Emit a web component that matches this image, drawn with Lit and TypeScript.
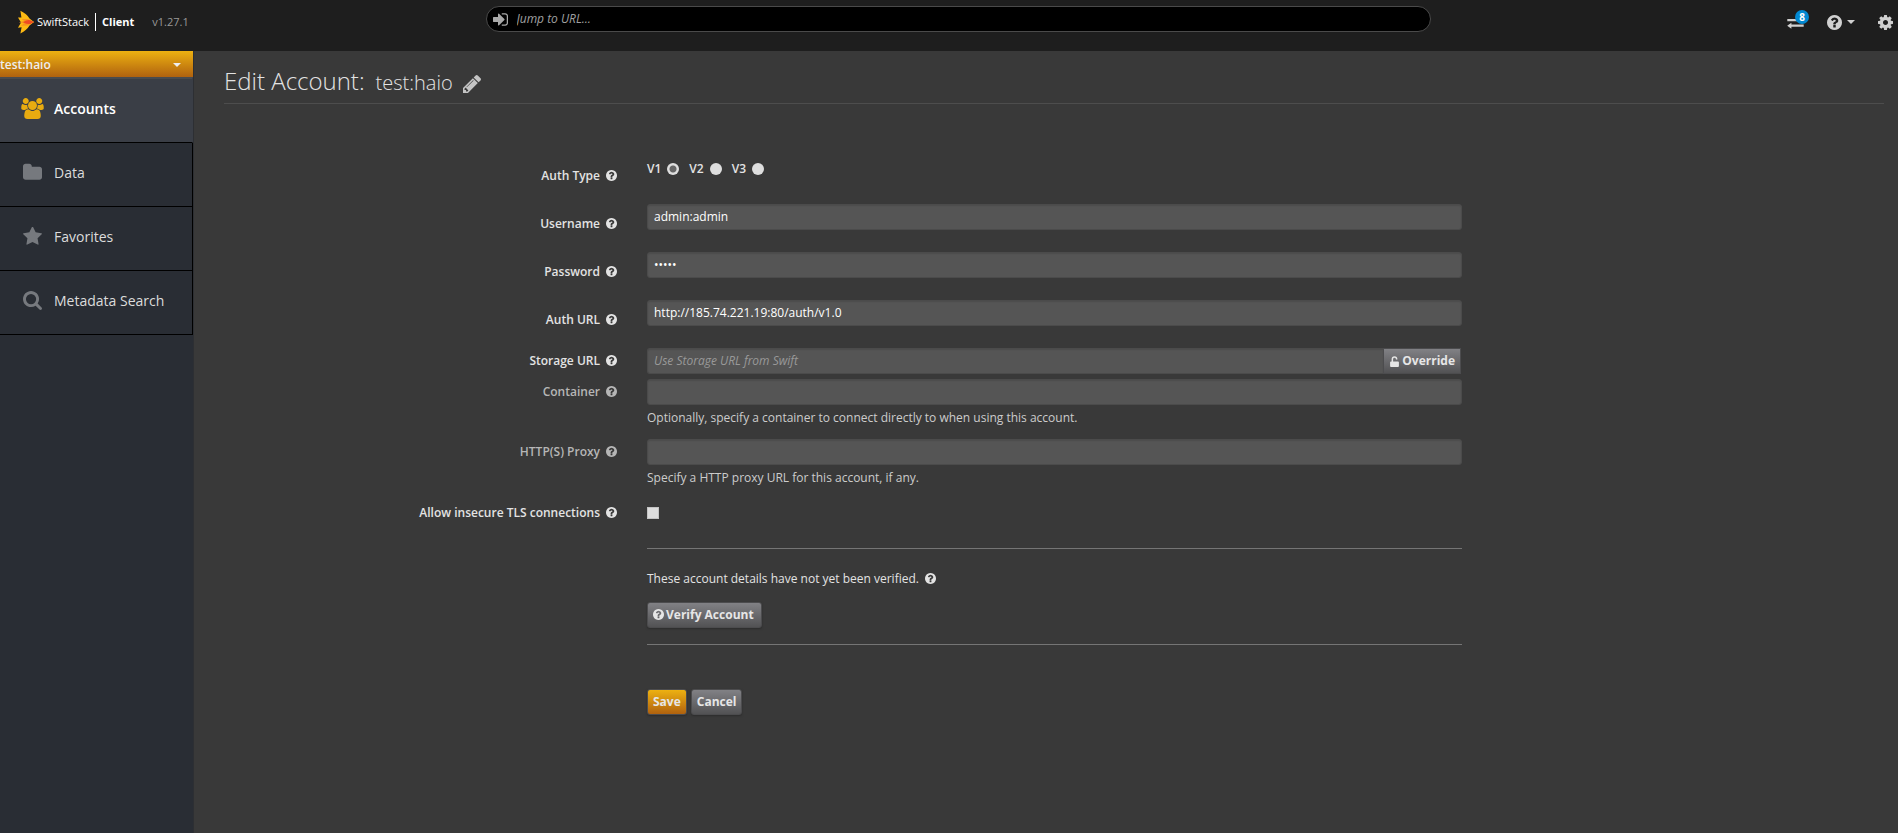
import { LitElement, html, css, svg, nothing } from "lit";
import { customElement, property } from "lit/decorators.js";
import { classMap } from "lit/directives/class-map.js";

const ICONS: Record<string, { box: string; d: string }> = {
  help: {
    box: "128 128 1536 1536",
    d: "M1024 1376v-192q0-14-9-23t-23-9h-192q-14 0-23 9t-9 23v192q0 14 9 23t23 9h192q14 0 23-9t9-23zm256-672q0-88-55.5-163t-138.5-116-170-41q-243 0-371 213-15 24 8 42l132 100q7 6 19 6 16 0 25-12 53-68 86-92 34-24 86-24 48 0 85.5 26t37.5 59q0 38-20 61t-68 45q-63 28-115.5 86.5t-52.5 125.5v36q0 14 9 23t23 9h192q14 0 23-9t9-23q0-19 21.5-49.5t54.5-49.5q32-18 49-28.5t46-35 44.5-48 28-60.5 12.5-81zm384 192q0 209-103 385.5t-279.5 279.5-385.5 103-385.5-103-279.5-279.5-103-385.5 103-385.5 279.5-279.5 385.5-103 385.5 103 279.5 279.5 103 385.5z",
  },
  users: {
    box: "-64 0 1920 1792",
    d: "M529 896q-162 5-265 128h-134q-82 0-138-40.5t-56-118.5q0-353 124-353 6 0 43.5 21t97.5 42.5 119 21.5q67 0 133-23-5 37-5 66 0 139 81 256zm1071 637q0 120-73 189.5t-194 69.5h-874q-121 0-194-69.5t-73-189.5q0-53 3.5-103.5t14-109 26.5-108.5 43-97.5 62-81 85.5-53.5 111.5-20q10 0 43 21.5t73 48 107 48 135 21.5 135-21.5 107-48 73-48 43-21.5q61 0 111.5 20t85.5 53.5 62 81 43 97.5 26.5 108.5 14 109 3.5 103.5zm-1024-1277q0 106-75 181t-181 75-181-75-75-181 75-181 181-75 181 75 75 181zm704 384q0 159-112.5 271.5t-271.5 112.5-271.5-112.5-112.5-271.5 112.5-271.5 271.5-112.5 271.5 112.5 112.5 271.5zm576 225q0 78-56 118.5t-138 40.5h-134q-103-123-265-128 81-117 81-256 0-29-5-66 66 23 133 23 59 0 119-21.5t97.5-42.5 43.5-21q124 0 124 353zm-128-609q0 106-75 181t-181 75-181-75-75-181 75-181 181-75 181 75 75 181z",
  },
  folder: {
    box: "64 64 1664 1664",
    d: "M1728 608v704q0 92-66 158t-158 66h-1216q-92 0-158-66t-66-158v-960q0-92 66-158t158-66h320q92 0 158 66t66 158v32h672q92 0 158 66t66 158z",
  },
  star: {
    box: "64 64 1664 1664",
    d: "M1728 647q0 22-26 48l-363 354 86 500q1 7 1 20 0 21-10.5 35.5t-30.5 14.5q-19 0-40-12l-449-236-449 236q-22 12-40 12-21 0-31.5-14.5t-10.5-35.5q0-6 2-20l86-500-364-354q-25-27-25-48 0-37 56-46l502-73 225-455q19-41 49-41t49 41l225 455 502 73q56 9 56 46z",
  },
  search: {
    box: "64 128 1664 1664",
    d: "M1216 832q0-185-131.5-316.5t-316.5-131.5-316.5 131.5-131.5 316.5 131.5 316.5 316.5 131.5 316.5-131.5 131.5-316.5zm512 832q0 52-38 90t-90 38q-54 0-90-38l-343-342q-179 124-399 124-143 0-273.5-55.5t-225-150-150-225-55.5-273.5 55.5-273.5 150-225 225-150 273.5-55.5 273.5 55.5 225 150 150 225 55.5 273.5q0 220-124 399l343 343q37 37 37 90z",
  },
  pencil: {
    box: "128 149 1515 1515",
    d: "M491 1536l91-91-235-235-91 91v107h128v128h107zm523-928q0-22-22-22-10 0-17 7l-542 542q-7 7-7 17 0 22 22 22 10 0 17-7l542-542q7-7 7-17zm-54-192l416 416-832 832h-416v-416zm683 96q0 53-37 90l-166 166-416-416 166-165q36-38 90-38 53 0 91 38l235 234q37 39 37 91z",
  },
  signin: {
    box: "128 128 1536 1536",
    d: "M1312 896q0 26-19 45l-544 544q-19 19-45 19t-45-19-19-45v-288h-448q-26 0-45-19t-19-45v-384q0-26 19-45t45-19h448v-288q0-26 19-45t45-19 45 19l544 544q19 19 19 45zm352-352v704q0 119-84.5 203.5t-203.5 84.5h-320q-13 0-22.5-9.5t-9.5-22.5q0-4-1-20t-.5-26.5 3-23.5 10-19.5 20.5-6.5h320q66 0 113-47t47-113v-704q0-66-47-113t-113-47h-312l-11.5-1-11.5-3-8-5.5-7-9-2-13.5q0-4-1-20t-.5-26.5 3-23.5 10-19.5 20.5-6.5h320q119 0 203.5 84.5t84.5 203.5z",
  },
  cog: {
    box: "128 128 1536 1536",
    d: "M1152 896q0-106-75-181t-181-75-181 75-75 181 75 181 181 75 181-75 75-181zm512-109v222q0 12-8 23t-20 13l-185 28q-19 54-39 91 35 50 107 138 10 12 10 25t-9 23q-27 37-99 108t-94 71q-12 0-26-9l-138-108q-44 23-91 38-16 136-29 186-7 28-36 28h-222q-14 0-24.5-8.5t-11.5-21.5l-28-184q-49-16-90-37l-141 107q-10 9-25 9-14 0-25-11-126-114-165-168-7-10-7-23 0-12 8-23 15-21 51-66.5t54-70.5q-27-50-41-99l-183-27q-13-2-21-12.5t-8-23.5v-222q0-12 8-23t19-13l186-28q14-46 39-92-40-57-107-138-10-12-10-24 0-10 9-23 26-36 98.5-107.5t94.5-71.5q13 0 26 10l138 107q44-23 91-38 16-136 29-186 7-28 36-28h222q14 0 24.5 8.5t11.5 21.5l28 184q49 16 90 37l142-107q9-9 24-9 13 0 25 10 129 119 165 170 7 8 7 22 0 12-8 23-15 21-51 66.5t-54 70.5q26 50 41 98l183 28q13 2 21 12.5t8 23.5z",
  },
  exchange: {
    box: "0 0 17 12",
    d: "M0.3 2H12V0.2L16 3L12 5.6V4.2H0.3ZM16.7 7.6V9.8H4.4V11.7L0.2 8.7L4.4 5.7V7.6Z",
  },
  unlock: {
    box: "0 0 9 11",
    d: "M1 5.4H1.6V3.2A2.9 2.9 0 0 1 7.4 3.2V3.6H5.9V3.2A1.4 1.4 0 0 0 3.1 3.2V5.4H8A.9.9 0 0 1 8.9 6.3V10.1A.9.9 0 0 1 8 11H1A.9.9 0 0 1 .1 10.1V6.3A.9.9 0 0 1 1 5.4Z",
  },
  caret: { box: "0 0 8 4", d: "M0 0H8L4 4Z" },
};

@customElement("ui-icon")
class UiIcon extends LitElement {
  @property() name = "help";
  static styles = css`
    :host { display: inline-block; flex: none; width: 11px; height: 11px; }
    .glyph { display: block; width: 100%; height: 100%; fill: currentColor; }
  `;
  render() {
    const icon = ICONS[this.name];
    return html`<svg class="glyph" viewBox=${icon.box} aria-hidden="true">${svg`<path d=${icon.d} />`}</svg>`;
  }
}

const NAV = [
  { label: "Accounts", icon: "users", active: true },
  { label: "Data", icon: "folder", active: false },
  { label: "Favorites", icon: "star", active: false },
  { label: "Metadata Search", icon: "search", active: false },
];

@customElement("app-root")
class AppRoot extends LitElement {
  static styles = css`
    :host {
      display: flex;
      flex-direction: column;
      min-height: 100vh;
      background: #393939;
      color: #e3e3e3;
      font: 12px/18px "Open Sans", "Noto Sans", sans-serif;
    }
    * { box-sizing: border-box; }
    input, button, select { font: inherit; color: inherit; margin: 0; }

    .topbar {
      display: grid;
      grid-template-columns: 1fr minmax(200px, 945px) 1fr;
      height: 51px;
      padding-left: 18px;
      background: #1e1e1e;
    }
    .brand { display: flex; align-items: center; height: 43px; color: #fff; }
    .logo { width: 16px; height: 24px; margin-right: 3px; }
    .wordmark { font-size: 11px; font-weight: 500; }
    .product { border-left: 1px solid #fff; margin-left: 6px; padding-left: 6px; font-size: 11px; font-weight: 700; }
    .version { margin-left: 18px; font-size: 11px; color: #999; }
    .jump {
      display: flex;
      align-items: center;
      gap: 9px;
      height: 26px;
      margin-top: 6px;
      padding: 0 6px;
      border: 1px solid #4a4a4a;
      border-radius: 13px;
      background: #000;
      color: #a8a8a8;
    }
    .jump ui-icon { width: 15px; height: 15px; }
    .jump-input { flex: 1; min-width: 0; padding: 0; border: 0; outline: 0; background: none; font-style: italic; }
    .jump-input::placeholder { color: #a0a0a0; opacity: 1; }
    .tools { display: flex; align-items: center; justify-content: flex-end; height: 44px; padding-right: 5px; color: #d0d0d0; }
    .tool { display: flex; align-items: center; gap: 5px; padding: 0; border: 0; background: none; position: relative; }
    .tool ui-icon { width: 15px; height: 15px; }
    .tool .exchange { width: 17px; height: 12px; margin-top: 2px; }
    .tool .caret, .account .caret { width: 8px; height: 4px; }
    .tool + .tool { margin-left: 23px; }
    .badge {
      position: absolute;
      left: 8px;
      top: -5px;
      width: 14px;
      height: 14px;
      border-radius: 7px;
      background: #0288d1;
      color: #fff;
      font: 700 10px/14px "Open Sans", sans-serif;
      text-align: center;
    }

    .body { display: flex; flex: 1; }
    .side { flex: none; width: 194px; background: #292d34; border-right: 1px solid #2d2f33; }
    .account {
      display: flex;
      align-items: center;
      justify-content: space-between;
      width: 100%;
      height: 26px;
      padding: 2px 12px 0 0;
      border: 0;
      background: linear-gradient(#edb111, #b0620f);
      color: #eee;
      font-weight: 600;
    }
    .nav-item {
      display: flex;
      align-items: center;
      gap: 12px;
      height: 64px;
      padding: 0 0 4px 23px;
      border: 1px solid #000;
      border-width: 0 1px 1px 0;
      color: #dcdcdc;
      font-size: 14px;
      text-decoration: none;
    }
    .nav-item ui-icon { width: 19px; height: 19px; color: #76797e; }
    .nav-item.active { height: 66px; border-right-color: #3a3e46; border-top: 2px solid #4a4b4e; background: #3a3e46; color: #fff; font-weight: 600; }
    .nav-item.active ui-icon { width: 23px; height: 21px; margin: 0 -2px; color: #e8ab10; }

    .main { flex: 1; min-width: 0; padding: 13px 14px 0 30px; }
    .title {
      display: flex;
      align-items: baseline;
      height: 40px;
      margin: 0;
      border-bottom: 1px solid #4d4d4d;
      font-size: 24px;
      line-height: 34px;
      font-weight: 300;
    }
    .name { margin: 0 10px 0 11px; font-size: 20px; }
    .title ui-icon { width: 18px; height: 18px; align-self: center; color: #c4c4c4; }

    .form { padding-top: 52px; }
    .row {
      display: grid;
      grid-template-columns: minmax(0, 393fr) minmax(0, 815fr) minmax(0, 392fr);
      column-gap: 30px;
      margin-bottom: 22px;
    }
    .row.tight { margin-bottom: 5px; }
    .row.noted { margin-bottom: 12px; }
    .row.noted + .row:not(.noted) { margin-top: 13px; }
    .label { display: flex; align-items: center; justify-content: flex-end; gap: 6px; height: 26px; font-weight: 600; }
    .label ui-icon, .status ui-icon, .verify ui-icon { margin-bottom: 1px; }
    .label.low { height: 40px; margin-bottom: -14px; }
    .label.dim { color: #b6b6b6; }
    .control { grid-column: 2; }
    .text {
      display: block;
      width: 100%;
      height: 26px;
      padding: 0 6px 2px;
      border: 1px solid #4b4b4b;
      border-radius: 3px;
      outline: 0;
      background: #555;
      color: #fff;
      box-shadow: inset 0 1px 1px #4d4d4d;
    }
    .text::placeholder { color: #999; opacity: 1; font-style: italic; }
    .group { display: flex; padding-right: 1px; }
    .group .text { flex: 1; min-width: 0; border-right: 0; border-radius: 3px 0 0 3px; }
    .group .btn { border-radius: 0; box-shadow: none; }
    .radios { display: flex; gap: 10px; height: 26px; align-items: center; font-weight: 600; }
    .radio { display: flex; align-items: center; gap: 6px; }
    .dot {
      appearance: none;
      width: 12px;
      height: 12px;
      border-radius: 6px;
      background: #dedede;
    }
    .dot:checked { background: radial-gradient(circle, #666 3px, #dedede 4px); }
    .tick { display: block; appearance: none; width: 12px; height: 12px; margin: 7px 0; background: #dedede; border: 1px solid #c4c4c4; }
    .note { margin: 4px 0 0; color: #ccc; }
    .btn {
      display: inline-flex;
      align-items: center;
      gap: 2px;
      height: 26px;
      padding: 0 5px;
      border: 1px solid #4c4c4e;
      border-radius: 3px;
      background: linear-gradient(#818185, #525254);
      box-shadow: 0 1px 2px #2c2c2c;
      color: #e6e6e6;
      font-weight: 700;
    }
    .verify { padding-right: 7px; }
    .save { background: linear-gradient(#edb111, #b0620f); }
    .checks { padding: 21px 0 16px; border: 1px solid #757575; border-width: 1px 0; margin: 0 0 22px; }
    .status { display: flex; align-items: center; gap: 6px; margin: 0 0 14px; }
    .actions { display: flex; gap: 4px; }
  `;

  private label(text: string, forId: string, extra = "") {
    const cls = { label: true, low: extra === "low", dim: extra === "dim" };
    return html`<label class=${classMap(cls)} for=${forId || nothing}>${text}<ui-icon name="help"></ui-icon></label>`;
  }

  render() {
    return html`
      <header class="topbar">
        <div class="brand">
          <svg class="logo" viewBox="0 0 16 24" aria-hidden="true">
            <path fill="#fdb913" d="M2.4 0.8Q9 4 11.5 8.5L16 12L11.5 15.5Q9 20 2.4 23.4L3.6 17.2L0 17.8L3 12.6L0 7.4L3.4 7.6Z" />
            <path fill="#f7941e" d="M3.6 9L10 9L16 12L10 15.4L3 15.8L6.4 13.2L0.8 12.2L6.4 11Z" />
            <path fill="#ee4b23" d="M5 12.2Q9 9.6 12 10.2L16 12L12 14Q9 14.4 5 12.2Z" />
          </svg>
          <span class="wordmark">SwiftStack</span>
          <span class="product">Client</span>
          <span class="version">v1.27.1</span>
        </div>
        <label class="jump">
          <ui-icon name="signin"></ui-icon>
          <input class="jump-input" type="text" placeholder="Jump to URL..." aria-label="Jump to URL" />
        </label>
        <div class="tools">
          <button class="tool" aria-label="Transfers"><ui-icon class="exchange" name="exchange"></ui-icon><span class="badge">8</span></button>
          <button class="tool" aria-label="Help"><ui-icon name="help"></ui-icon><ui-icon class="caret" name="caret"></ui-icon></button>
          <button class="tool" aria-label="Settings"><ui-icon name="cog"></ui-icon></button>
        </div>
      </header>
      <div class="body">
        <nav class="side">
          <button class="account">test:haio<ui-icon class="caret" name="caret"></ui-icon></button>
          ${NAV.map(
            (n) => html`<a href="#" class=${classMap({ "nav-item": true, active: n.active })}><ui-icon name=${n.icon}></ui-icon>${n.label}</a>`
          )}
        </nav>
        <main class="main">
          <h1 class="title">Edit Account:<span class="name">test:haio</span><ui-icon name="pencil"></ui-icon></h1>
          <form class="form">
            <div class="row">
              ${this.label("Auth Type", "v1", "low")}
              <div class="control radios">
                ${["V1", "V2", "V3"].map(
                  (v, i) => html`<label class="radio">${v}<input class="dot" type="radio" name="auth" id=${v.toLowerCase()} ?checked=${i === 0} /></label>`
                )}
              </div>
            </div>
            <div class="row">
              ${this.label("Username", "username", "low")}
              <div class="control"><input class="text" id="username" type="text" value="admin:admin" /></div>
            </div>
            <div class="row">
              ${this.label("Password", "password", "low")}
              <div class="control"><input class="text" id="password" type="password" value="admin" /></div>
            </div>
            <div class="row">
              ${this.label("Auth URL", "auth-url", "low")}
              <div class="control"><input class="text" id="auth-url" type="text" value="http://185.74.221.19:80/auth/v1.0" /></div>
            </div>
            <div class="row tight">
              ${this.label("Storage URL", "storage-url")}
              <div class="control group">
                <input class="text" id="storage-url" type="text" placeholder="Use Storage URL from Swift" />
                <button class="btn" type="button"><ui-icon name="unlock"></ui-icon>Override</button>
              </div>
            </div>
            <div class="row noted">
              ${this.label("Container", "container", "dim")}
              <div class="control">
                <input class="text" id="container" type="text" />
                <p class="note">Optionally, specify a container to connect directly to when using this account.</p>
              </div>
            </div>
            <div class="row noted">
              ${this.label("HTTP(S) Proxy", "proxy", "dim")}
              <div class="control">
                <input class="text" id="proxy" type="text" />
                <p class="note">Specify a HTTP proxy URL for this account, if any.</p>
              </div>
            </div>
            <div class="row">
              ${this.label("Allow insecure TLS connections", "insecure")}
              <div class="control"><input class="tick" id="insecure" type="checkbox" /></div>
            </div>
            <div class="row">
              <div class="control checks">
                <p class="status">These account details have not yet been verified.<ui-icon name="help"></ui-icon></p>
                <button class="btn verify" type="button"><ui-icon name="help"></ui-icon>Verify Account</button>
              </div>
            </div>
            <div class="row">
              <div class="control actions">
                <button class="btn save" type="button">Save</button>
                <button class="btn" type="button">Cancel</button>
              </div>
            </div>
          </form>
        </main>
      </div>
    `;
  }
}
